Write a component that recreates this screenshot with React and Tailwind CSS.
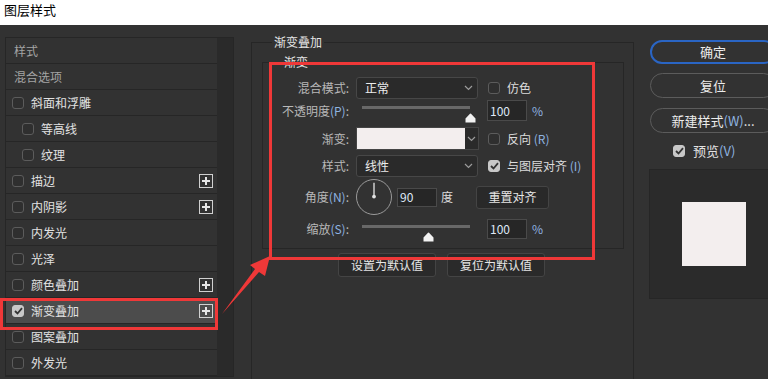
import React from 'react';

const items = [
  {t: '样式', head: true},
  {t: '混合选项', head: true},
  {t: '斜面和浮雕'},
  {t: '等高线', sub: true},
  {t: '纹理', sub: true},
  {t: '描边', plus: true},
  {t: '内阴影', plus: true},
  {t: '内发光'},
  {t: '光泽'},
  {t: '颜色叠加', plus: true},
  {t: '渐变叠加', plus: true, on: true},
  {t: '图案叠加'},
  {t: '外发光'},
]

const Box = ({checked}) => (
  <span className={'flex h-[12px] w-[12px] shrink-0 items-center justify-center rounded-[3px] border ' + (checked ? 'border-[#c8c8c8] bg-[#c8c8c8]' : 'border-[#5c5c5c] bg-[#2f2f2f]')}>
    {checked && (
      <svg width="9" height="8" viewBox="0 0 9 8">
        <path d="M1 4 L3.5 6.5 L8 1.2" fill="none" stroke="#333" strokeWidth="1.8"/>
      </svg>
    )}
  </span>
)

const Plus = () => (
  <span className="flex h-[14px] w-[14px] items-center justify-center border border-[#d0d0d0]">
    <svg width="10" height="10" viewBox="0 0 10 10">
      <path d="M5 1 V9 M1 5 H9" stroke="#e6e6e6" strokeWidth="2"/>
    </svg>
  </span>
)

const Chevron = () => (
  <svg width="9" height="6" viewBox="0 0 9 6">
    <path d="M1 1 L4.5 4.5 L8 1" fill="none" stroke="#9c9c9c" strokeWidth="1.2"/>
  </svg>
)

const Thumb = () => (
  <svg width="11" height="10" viewBox="0 0 11 10">
    <path d="M5.5 0.5 Q6 0.5 6.5 1.2 L10.5 5.5 V9.5 H0.5 V5.5 L4.5 1.2 Q5 0.5 5.5 0.5 Z" fill="#f2f2f2"/>
  </svg>
)

const Key = ({children}) => <span className="text-[#8fb4e0]">{children}</span>

const Label = ({children}) => (
  <div className="w-[86px] shrink-0 text-right text-[12px] text-[#b8b8b8]">{children}</div>
)

const Field = ({value, h}) => (
  <div className={'flex w-[40px] items-center border border-[#4a4a4a] bg-[#262626] pl-[2px] text-[12px] text-[#dfe8f7] ' + h}>{value}</div>
)

const Select = ({value}) => (
  <div className="flex h-[22px] w-[122px] items-center justify-between rounded-[3px] border border-[#474747] bg-[#2a2a2a] pl-[8px] pr-[4px] text-[12px] text-[#ececec]">
    <span>{value}</span>
    <Chevron/>
  </div>
)

const Slider = ({pos}) => (
  <div className="relative h-full w-[122px]">
    <div className="ml-[6px] mt-[6px] h-[3px] w-[108px] bg-[#686868]"/>
    <div className={'absolute top-[7px] ' + pos}><Thumb/></div>
  </div>
)

const Check = ({checked, children}) => (
  <div className="ml-[10px] flex items-center gap-[7px] text-[12px] text-[#dcdcdc]">
    <Box checked={checked}/>
    <span>{children}</span>
  </div>
)

export default function App() {
  return (
    <div className="relative h-[379px] w-[768px] overflow-hidden bg-[#323232] font-['Noto_Sans_CJK_SC',sans-serif]">
      <div className="h-[25px] bg-white pl-[4px] pt-[1px] text-[13px] leading-[18px] text-black">图层样式</div>

      <div className="flex">
        {/* left list */}
        <div className="w-[236px] shrink-0 pl-[5px] pt-[12px]">
          <div className="flex w-[229px] border border-[#262626]">
            <div className="w-[211px]">
              {items.map((it, key) => (
                <div key={key}
                     className={'flex h-[26px] items-center border-b border-[#262626] text-[12px] ' + (it.on ? 'bg-[#4c4c4c]' : 'bg-[#323232]') + (it.head ? ' pl-[8px] text-[#a4a4a4]' : it.sub ? ' pl-[16px] text-[#e2e2e2]' : ' pl-[6px] text-[#e2e2e2]')}>
                  {!it.head && <Box checked={it.on}/>}
                  <span className={it.head ? '' : 'ml-[7px]'}>{it.t}</span>
                  {it.plus && <span className="ml-auto mr-[4px]"><Plus/></span>}
                </div>
              ))}
            </div>
            <div className="w-[16px] bg-[#2a2a2a]"/>
          </div>
        </div>

        {/* middle panel */}
        <div className="w-[404px] shrink-0 pl-[15px] pt-[10px]">
          <fieldset className="h-[360px] w-[383px] border border-[#262626]">
            <legend className="ml-[20px] px-[2px] text-[12px] leading-[14px] text-[#e4e4e4]">渐变叠加</legend>
            <fieldset className="ml-[10px] mt-[6px] h-[194px] w-[362px] border border-[#262626]">
              <legend className="ml-[19px] px-[2px] text-[12px] leading-[14px] text-[#e4e4e4]">渐变</legend>

              <div className="mt-[8px] flex h-[22px] items-center">
                <Label>混合模式:</Label>
                <div className="ml-[7px]"><Select value="正常"/></div>
                <Check>仿色</Check>
              </div>

              <div className="mt-[1px] flex h-[21px] items-center">
                <Label>不透明度<Key>(P)</Key>:</Label>
                <div className="ml-[7px] h-full"><Slider pos="left-[109px]"/></div>
                <div className="ml-[9px]"><Field value="100" h="h-[21px]"/></div>
                <span className="ml-[5px] text-[12px] text-[#8fb4e0]">%</span>
              </div>

              <div className="mt-[6px] flex h-[23px] items-center">
                <Label>渐变:</Label>
                <div className="ml-[7px] flex h-[23px] w-[123px] border border-[#454545] bg-[#2a2a2a]">
                  <div className="flex-1 bg-[#f3eeee]"/>
                  <div className="flex w-[13px] items-center justify-center"><Chevron/></div>
                </div>
                <div className="-ml-[1px] flex"><Check>反向 <Key>(R)</Key></Check></div>
              </div>

              <div className="mt-[5px] flex h-[22px] items-center">
                <Label>样式:</Label>
                <div className="ml-[7px]"><Select value="线性"/></div>
                <Check checked>与图层对齐 <Key>(I)</Key></Check>
              </div>

              <div className="mt-[2px] flex h-[36px] items-center">
                <Label>角度<Key>(N)</Key>:</Label>
                <div className="relative ml-[7px] flex h-[36px] w-[36px] items-center justify-center rounded-full border border-[#9a9a9a]">
                  <svg width="36" height="36" viewBox="0 0 36 36">
                    <path d="M18 17 V3" stroke="#e2e2e2" strokeWidth="1.4"/>
                    <circle cx="18" cy="17.5" r="2" fill="#e2e2e2"/>
                  </svg>
                </div>
                <div className="ml-[5px]"><Field value="90" h="h-[19px]"/></div>
                <span className="ml-[4px] text-[12px] text-[#dcdcdc]">度</span>
                <div className="ml-[23px] flex h-[23px] w-[73px] items-center justify-center rounded-[3px] border border-[#444] bg-[#292929] text-[12px] text-[#e6e6e6]">重置对齐</div>
              </div>

              <div className="mt-[4px] flex h-[20px] items-center">
                <Label>缩放<Key>(S)</Key>:</Label>
                <div className="ml-[7px] h-full"><Slider pos="left-[67px]"/></div>
                <div className="ml-[9px]"><Field value="100" h="h-[20px]"/></div>
                <span className="ml-[5px] text-[12px] text-[#8fb4e0]">%</span>
              </div>
            </fieldset>

            <div className="mt-[4px] flex justify-center gap-[11px] pr-[2px]">
              <div className="flex h-[24px] w-[98px] items-center justify-center rounded-[3px] border border-[#444] bg-[#2a2a2a] text-[12px] text-[#e6e6e6]">设置为默认值</div>
              <div className="flex h-[24px] w-[98px] items-center justify-center rounded-[3px] border border-[#444] bg-[#2a2a2a] text-[12px] text-[#e6e6e6]">复位为默认值</div>
            </div>
          </fieldset>
        </div>

        {/* right column */}
        <div className="w-[128px] shrink-0 pl-[10px] pt-[15px]">
          <div className="flex h-[24px] w-[126px] items-center justify-center rounded-full border-2 border-[#2a65c4] text-[13px] text-[#ececec]">确定</div>
          <div className="mt-[9px] flex h-[25px] w-[126px] items-center justify-center rounded-full border-[1.5px] border-[#5c5c5c] text-[13px] text-[#ececec]">复位</div>
          <div className="mt-[10px] flex h-[25px] w-[126px] items-center justify-center rounded-full border-[1.5px] border-[#5c5c5c] text-[13px] text-[#ececec]">新建样式<Key>(W)</Key>...</div>
          <div className="mt-[9px] flex h-[18px] items-center gap-[8px] pl-[23px] text-[13px] leading-[18px] text-[#e2e2e2]">
            <Box checked/>
            <span>预览<Key>(V)</Key></span>
          </div>
          <div className="-ml-[1px] mt-[9px] h-[130px] w-[130px] border border-[#262626] bg-[#2b2b2b] pl-[32px] pt-[32px]">
            <div className="h-[64px] w-[64px] bg-[#f3eeee]"/>
          </div>
        </div>
      </div>

      {/* red highlight boxes and arrow */}
      <div className="absolute left-0 top-[298px] h-[32px] w-[218px] border-[3px] border-[#ef3838]"/>
      <div className="absolute left-[269px] top-[62px] h-[198px] w-[326px] border-[3px] border-[#ef3838]"/>
      <svg className="pointer-events-none absolute left-0 top-0" width="768" height="379">
        <polygon points="222,314 255,269 250,265 270,256 265,276 259,272" fill="#ef3838"/>
      </svg>
    </div>
  );
}
